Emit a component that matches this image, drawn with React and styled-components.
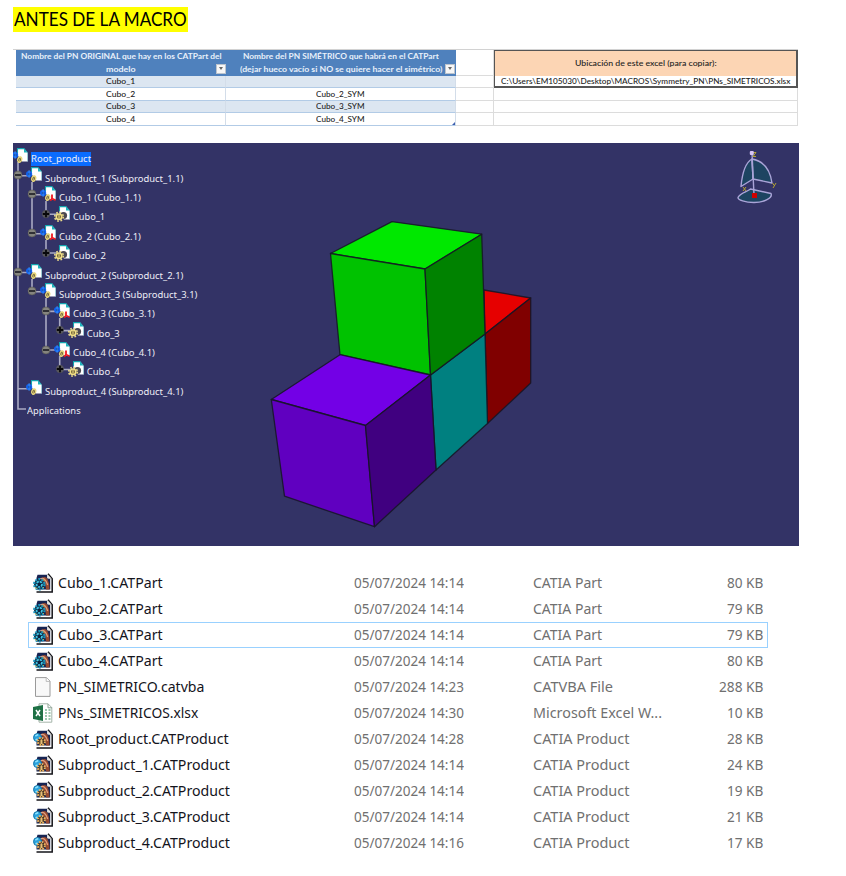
import React, { useLayoutEffect, useRef, useState } from 'react';
import styled, { createGlobalStyle } from 'styled-components';

const Global = createGlobalStyle`
  * { box-sizing: border-box; }
  body { margin: 0; background: #fff; }
`;

const Page = styled.main`
  width: 846px;
  height: 876px;
  padding: 7px 0 0 13px;
  display: flex;
  flex-direction: column;
  align-items: flex-start;
  overflow: hidden;
  background: #fff;
`;

/* ---------- text condensed or widened to a set line width ---------- */
const FitBox = styled.span`
  display: inline-block;
  flex: none;
  width: ${(p) => p.$w}px;
  text-align: left;
  white-space: pre;
`;
const FitInner = styled.span`
  display: inline-block;
  transform-origin: 0 50%;
`;
function Fit({ w, children }) {
  const ref = useRef(null);
  const [scale, setScale] = useState(1);
  useLayoutEffect(() => {
    setScale(w / ref.current.offsetWidth);
  }, [w, children]);
  return (
    <FitBox $w={w}>
      <FitInner ref={ref} style={{ transform: `scaleX(${scale})` }}>{children}</FitInner>
    </FitBox>
  );
}

const Title = styled.h1`
  margin: 0;
  height: 25px;
  padding-left: 1px;
  width: 175px;
  background: #ff0;
  font: 400 18.5px/24px Lato, Carlito, sans-serif;
  color: #000;
`;

/* ---------- spreadsheet ---------- */
const Sheet = styled.section`
  margin-top: 17px;
  width: 785px;
  height: 78px;
  padding-left: 3px;
  display: grid;
  grid-template-columns: 210px 230px 38px 304px;
  grid-template-rows: 25.5px repeat(4, 12.5px) 2px;
  border-top: 1px solid #d2d2d2;
  font: 500 8px/12px Lato, Carlito, sans-serif;
  color: #222;
`;
const HeadCell = styled.div`
  position: relative;
  background: #4f81bd;
  color: #e8f0fa;
  font-weight: 700;
  line-height: 12.5px;
  display: flex;
  flex-direction: column;
  align-items: center;
`;
const Filter = styled.span`
  position: absolute;
  right: ${(p) => p.$right}px;
  bottom: 2px;
  width: 10px;
  height: 10px;
  border: 1px solid #bcc4cd;
  background: #f7f7f7;
  display: flex;
  align-items: center;
  justify-content: center;
  &::after {
    content: '';
    border: 2px solid transparent;
    border-top: 3px solid #666;
    border-bottom: 0;
  }
`;
const Cell = styled.div`
  position: relative;
  display: flex;
  align-items: center;
  justify-content: center;
  border-bottom: 1px solid ${(p) => (p.$plain ? '#dcdcdc' : '#b2cbe6')};
  border-right: 1px solid ${(p) => (p.$plain ? '#dcdcdc' : '#d3dde9')};
  background: ${(p) => (p.$band ? '#dce6f1' : '#fff')};
`;
const Corner = styled.i`
  position: absolute;
  right: 0;
  bottom: 0;
  border-left: 3px solid transparent;
  border-bottom: 3px solid #3c5fb0;
`;
const Peach = styled.div`
  background: #fcd5b4;
  border: 2px solid #555;
  border-width: 1px 2px 0 1px;
  padding-bottom: 1px;
  display: flex;
  align-items: center;
  justify-content: center;
`;
const PathCell = styled.div`
  border: 2px solid #555;
  border-width: 0 2px 2px 1px;
  display: flex;
  align-items: center;
  justify-content: center;
  line-height: 10px;
`;

/* ---------- 3D viewer ---------- */
const Viewer = styled.section`
  position: relative;
  margin-top: 16px;
  width: 786px;
  height: 403px;
  background: #333366;
  overflow: hidden;
`;
const Scene = styled.svg`
  position: absolute;
  inset: 0;
`;
const Tree = styled.ul`
  position: relative;
  margin: 0;
  padding: 6.5px 0 0;
  list-style: none;
  font: 400 9.5px/14px "Noto Sans", "Open Sans", sans-serif;
  color: #eeeef6;
`;
const TreeRow = styled.li`
  height: 19.4px;
  display: flex;
  align-items: center;
  padding-left: ${(p) => p.$indent}px;
  margin-left: ${(p) => p.$shift}px;
`;
const Knob = styled.svg`
  flex: none;
  margin: -7px 3px 0 0;
`;
const NodeGlyph = styled.svg`
  flex: none;
  margin: -7px 3px 0 0;
`;
const Label = styled.span`
  display: flex;
  height: 14px;
  line-height: 13px;
  background: ${(p) => (p.$selected ? '#0a6cff' : 'transparent')};
`;

const TREE = [
  ['root', 0, 'Root_product', 60, null],
  ['product', 0, 'Subproduct_1 (Subproduct_1.1)', 138, '-'],
  ['instance', 1, 'Cubo_1 (Cubo_1.1)', 81.5, '-'],
  ['part', 2, 'Cubo_1', 32, '+'],
  ['instance', 1, 'Cubo_2 (Cubo_2.1)', 81.5, '-'],
  ['part', 2, 'Cubo_2', 33, '+'],
  ['product', 0, 'Subproduct_2 (Subproduct_2.1)', 138, '-'],
  ['product', 1, 'Subproduct_3 (Subproduct_3.1)', 138, '-'],
  ['instance', 2, 'Cubo_3 (Cubo_3.1)', 81.5, '-'],
  ['part', 3, 'Cubo_3', 33, '+'],
  ['instance', 2, 'Cubo_4 (Cubo_4.1)', 81.5, '-'],
  ['part', 3, 'Cubo_4', 33, '+'],
  ['product', 0, 'Subproduct_4 (Subproduct_4.1)', 138, ' '],
  ['text', 0, 'Applications', 54, null],
];

function TreeKnob({ sign }) {
  return (
    <Knob width="10" height="10" viewBox="0 0 10 10">
      {sign === '-' && (
        <>
          <circle cx="5" cy="5" r="4" fill="#85857f" stroke="#55554f" strokeWidth=".6" />
          <path d="M2 5h6" stroke="#15151c" strokeWidth="1.5" />
        </>
      )}
      {sign === '+' && (
        <>
          <circle cx="5" cy="5" r="3.9" fill="#55555a" />
          <path d="M1.8 5h6.4M5 1.8v6.4" stroke="#08080a" strokeWidth="1.8" />
        </>
      )}
    </Knob>
  );
}

function TreeIcon({ kind }) {
  return (
    <NodeGlyph width="16" height="16" viewBox="0 0 16 16">
      <path d="M5.5 .5H12L15.8 5V13.5H10L5.5 7z" fill="#fff" />
      <path d="M5.5 5V.6H12" fill="none" stroke="#13a5b0" strokeWidth="1.1" />
      <path d="M12 0l3.9 4.6H12z" fill="#1fb3bd" />
      <path d="M15.6 4.6V13.5" stroke="#6bbcc8" strokeWidth=".6" />
      {kind === 'part' ? (
        <>
          <circle cx="9.5" cy="9.5" r="3.6" fill="#4b4850" />
          <circle cx="5" cy="10.8" r="4.3" fill="none" stroke="#e9d98a" strokeWidth="1.6" strokeDasharray="1.7 1.68" />
          <circle cx="5" cy="10.8" r="2.8" fill="#75673a" stroke="#f1df87" strokeWidth="1.5" />
          <path d="M5 9v3.6" stroke="#f1df87" />
        </>
      ) : (
        <>
          <circle cx="3.1" cy="7" r="2.2" fill="#0d3580" stroke="#1263ef" strokeWidth="1.8" />
          <path d="M3.1 3.2v7.6" stroke="#3994ff" strokeWidth="1" />
          <ellipse cx="7.7" cy="11.6" rx="1.9" ry="2.6" transform="rotate(20 7.7 11.6)" fill="#50472e" stroke="#e8d77c" strokeWidth="1.4" />
          <path d="M8.8 8.3l-2.2 6.6" stroke="#e8d77c" strokeWidth=".8" />
          {kind === 'instance' && (
            <path d="M12 8.5v4M12 12.5l-1.7 2.2M12 12.5l3.6 1.7" stroke="#f01820" strokeWidth="1.8" fill="none" />
          )}
        </>
      )}
    </NodeGlyph>
  );
}

function ViewerScene() {
  return (
    <Scene width="786" height="403" viewBox="13 143 786 403">
      <g fill="none" stroke="#a9a9c2" strokeWidth="1.6">
        <path d="M18 162V409H26M18 175.7H28M18 272.5H28M18 388.8H28" />
        <path d="M32 182V233.7H42M32 194.8H42M32 279V291.8H42" />
        <path d="M46 201V214.3H57M46 240V253H57M46 298V350H56M46 311.4H56" />
        <path d="M59.7 318V330.6H70M59.7 356V369.5H70" />
      </g>
      <g stroke="#151525" strokeOpacity=".85" strokeWidth="1.3" strokeLinejoin="round">
        <path d="M484 290L530.7 298L485 334z" fill="#e60000" />
        <path d="M485 334L530.7 298V383L487.5 423.5z" fill="#800000" />
        <path d="M430.5 375L485 334L487.5 423.5L436 470z" fill="#008080" />
        <path d="M330.5 253.5L392 221.7L481.7 234.2L425 269z" fill="#00e800" />
        <path d="M330.5 253.5L425 269L430.5 375L340 354.7z" fill="#00c200" />
        <path d="M425 269L481.7 234.2L485 334L430.5 375z" fill="#008200" />
        <path d="M271.3 399.5L340 354.7L430.5 375L365.5 425.5z" fill="#7300e6" />
        <path d="M271.3 399.5L365.5 425.5L374.5 526.7L284.5 496.2z" fill="#6000c0" />
        <path d="M365.5 425.5L430.5 375L436 470L374.5 526.7z" fill="#400080" />
      </g>
      <g fill="#1d4461" stroke="#aaa4d8" strokeWidth="1.4" strokeLinejoin="round">
        <path d="M752 159Q743 164 741 186.5L753 179z" />
        <path d="M752 159Q769 162 772 183L753 179z" />
        <path d="M750.5 189L771 193.5C773 198 764 202.5 754 202.5C745 202.5 738 200 738 197.5C740 193 747 192 750.5 189z" />
        <path d="M752 153L754 195" fill="none" />
      </g>
      <g fill="none" stroke="#b4a431" strokeWidth="1">
        <path d="M753 152.5h3l-3 4h3" />
        <path d="M743 187l3 4M746 187l-3 4" />
        <path d="M772.5 183l1.7 2.5M776 183l-3 5" />
      </g>
      <rect x="749.8" y="151" width="4" height="4" rx="1" fill="#d8c5f5" />
      <rect x="752" y="193" width="5" height="5" fill="#cf0000" />
    </Scene>
  );
}

/* ---------- file list ---------- */
const Files = styled.section`
  margin: 24px 0 0 15px;
  width: 740px;
  font: 400 14px/23px "Noto Sans", "Open Sans", sans-serif;
  color: #707070;
`;
const FileRow = styled.div`
  height: 26px;
  display: grid;
  grid-template-columns: 29px 296px 179px 1fr auto;
  align-items: center;
  padding: 0 4px 2px 0;
  border: 1px solid ${(p) => (p.$focused ? '#99d1ff' : 'transparent')};
`;
const IconSlot = styled.span`
  height: 20px;
  display: flex;
  padding-left: 4px;
`;
const Name = styled.span`
  color: #14141c;
`;

const FILES = [
  ['part', 'Cubo_1.CATPart', 105, '14:14', 'CATIA Part', 69, '80 KB', 36],
  ['part', 'Cubo_2.CATPart', 105, '14:14', 'CATIA Part', 69, '79 KB', 36],
  ['part', 'Cubo_3.CATPart', 105, '14:14', 'CATIA Part', 69, '79 KB', 36],
  ['part', 'Cubo_4.CATPart', 105, '14:14', 'CATIA Part', 69, '80 KB', 36],
  ['blank', 'PN_SIMETRICO.catvba', 146, '14:23', 'CATVBA File', 80, '288 KB', 44],
  ['excel', 'PNs_SIMETRICOS.xlsx', 140, '14:30', 'Microsoft Excel W...', 129, '10 KB', 36],
  ['product', 'Root_product.CATProduct', 171, '14:28', 'CATIA Product', 96, '28 KB', 36],
  ['product', 'Subproduct_1.CATProduct', 172, '14:14', 'CATIA Product', 96, '24 KB', 36],
  ['product', 'Subproduct_2.CATProduct', 172, '14:14', 'CATIA Product', 96, '19 KB', 36],
  ['product', 'Subproduct_3.CATProduct', 172, '14:14', 'CATIA Product', 96, '21 KB', 36],
  ['product', 'Subproduct_4.CATProduct', 172, '14:16', 'CATIA Product', 96, '17 KB', 36],
];

function FileIcon({ kind }) {
  if (kind === 'blank') {
    return (
      <svg width="20" height="20" viewBox="0 0 20 20">
        <path d="M2.5 .6h11l3.5 3.5V19.4H2.5z" fill="#f8f8f8" stroke="#9a9a9a" />
        <path d="M13.2 .6v3.8H17" fill="#fff" stroke="#aaa" strokeWidth=".8" />
      </svg>
    );
  }
  if (kind === 'excel') {
    return (
      <svg width="20" height="20" viewBox="0 0 20 20">
        <path d="M6 .8h9l3.8 3.8v14.6H6z" fill="#fff" stroke="#a5b5aa" />
        <path d="M15 .8v4h4" fill="none" stroke="#8ba293" />
        <path d="M12 7h2M15.5 7h2M12 10h2M15.5 10h2M12 13h2M15.5 13h2M12 16h2M15.5 16h2" stroke="#79b892" strokeWidth="1.5" />
        <path d="M0 4l10-2v16L0 16z" fill="#1e7145" />
        <path d="M3 7l4 6M7 7l-4 6" stroke="#fff" strokeWidth="1.5" />
      </svg>
    );
  }
  return (
    <svg width="20" height="20" viewBox="0 0 20 20">
      <path d="M3.5 .8h11l4.5 4V19H3.5z" fill="#fff" />
      <path d="M4.5 1.8H14V5l3.2 1V16.5H3.5V5z" fill="#172452" />
      <path d="M7 6Q12 2 14.5 6Q17 11 16.5 16.5H13Q13 9 7 6z" fill="#96492f" />
      <path d="M7 6Q12 3.5 14.7 12" fill="none" stroke="#e0a080" strokeWidth="1.3" />
      <path d="M3.5 19.1h15.7V5.8L15 .8" fill="none" stroke="#15151a" strokeWidth="1.5" />
      <path d="M14.8 1.6v4h3.6z" fill="#f4f4f4" stroke="#999" strokeWidth=".5" />
      {kind === 'part' ? (
        <>
          <circle cx="6.3" cy="11.3" r="5.2" fill="#103049" stroke="#1995bd" strokeWidth="2.2" strokeDasharray="1.9 1.37" />
          <circle cx="6.3" cy="11.3" r="2.7" fill="#0b2340" stroke="#42c7e5" strokeWidth="1.7" strokeDasharray="2.3 .9" />
          <path d="M2 14l2 2M9.7 6.5l2 1M10 14l1 1" stroke="#c3a94f" />
        </>
      ) : (
        <>
          <circle cx="4.5" cy="8.6" r="4" fill="#2aa1dc" stroke="#1678ac" />
          <path d="M2.3 7l3-1.5M2.5 11l2-1" stroke="#8ae3ff" strokeWidth="1.4" />
          <circle cx="8.3" cy="12.5" r="3.6" fill="#251a18" stroke="#e9b25f" strokeWidth="2.1" strokeDasharray="1.7 1.13" />
          <path d="M6.5 12H10M6.5 14H10M8.3 10.2v5" stroke="#ffd382" strokeWidth="1" />
        </>
      )}
    </svg>
  );
}

export default function App() {
  return (
    <Page>
      <Global />
      <Title><Fit w={173}>ANTES DE LA MACRO</Fit></Title>

      <Sheet>
        <HeadCell>
          <Fit w={201}>Nombre del PN ORIGINAL que hay en los CATPart del</Fit>
          <Fit w={30}>modelo</Fit>
          <Filter $right={0} />
        </HeadCell>
        <HeadCell>
          <Fit w={196}>Nombre del PN SIMÉTRICO que habrá en el CATPart</Fit>
          <Fit w={202}>(dejar hueco vacío si NO se quiere hacer el simétrico)</Fit>
          <Filter $right={1} />
        </HeadCell>
        <Cell $plain />
        <Peach><Fit w={142}>Ubicación de este excel (para copiar):</Fit></Peach>
        {[1, 2, 3, 4].map((n) => (
          <React.Fragment key={n}>
            <Cell $band={n % 2 === 1}><Fit w={29}>{`Cubo_${n}`}</Fit></Cell>
            <Cell $band={n % 2 === 1}>
              {n > 1 && <Fit w={49}>{`Cubo_${n}_SYM`}</Fit>}
              {n === 4 && <Corner />}
            </Cell>
            <Cell $plain />
            {n === 1 ? (
              <PathCell>
                <Fit w={289}>C:\Users\EM105030\Desktop\MACROS\Symmetry_PN\PNs_SIMETRICOS.xlsx</Fit>
              </PathCell>
            ) : (
              <Cell $plain />
            )}
          </React.Fragment>
        ))}
      </Sheet>

      <Viewer>
        <ViewerScene />
        <Tree>
          {TREE.map(([kind, level, text, w, sign], i) => (
            <TreeRow key={i} $shift={kind === 'root' ? -1 : 0} $indent={kind === 'text' ? 14 : level * 13.9}>
              {sign && <TreeKnob sign={sign} />}
              {kind !== 'text' && <TreeIcon kind={kind} />}
              <Label $selected={kind === 'root'}><Fit w={w}>{text}</Fit></Label>
            </TreeRow>
          ))}
        </Tree>
      </Viewer>

      <Files>
        {FILES.map(([kind, name, nw, time, type, tw, size, sw]) => (
          <FileRow key={name} $focused={name === 'Cubo_3.CATPart'}>
            <IconSlot><FileIcon kind={kind} /></IconSlot>
            <Name><Fit w={nw}>{name}</Fit></Name>
            <Fit w={110}>{`05/07/2024 ${time}`}</Fit>
            <Fit w={tw}>{type}</Fit>
            <Fit w={sw}>{size}</Fit>
          </FileRow>
        ))}
      </Files>
    </Page>
  );
}
